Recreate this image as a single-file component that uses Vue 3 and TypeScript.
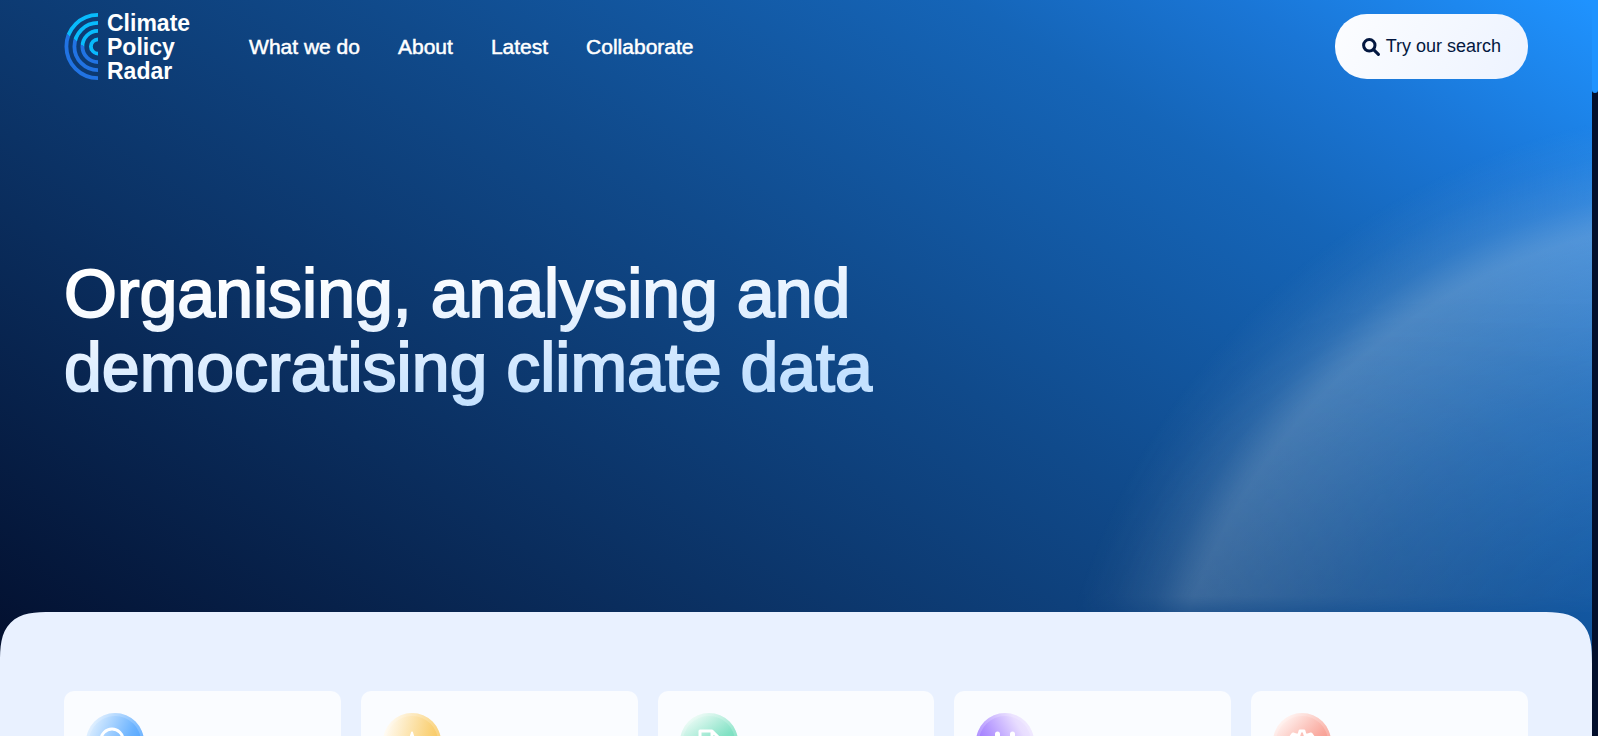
<script setup lang="ts">
interface Feature {
  name: string
  icon: string
}

const links: string[] = ['What we do', 'About', 'Latest', 'Collaborate']

const features: Feature[] = [
  { name: 'lens', icon: 'M34 35l8 8M26 16a11 11 0 1 0 0 22a11 11 0 0 0 0-22z' },
  { name: 'spark', icon: 'M29 19.500l2.500 8L40 30l-8.500 2.500L29 41l-2.500-8.500L18 30l8.500-2.500z' },
  { name: 'document', icon: 'M20 18H32l6.500 6.500V42H20zM32 18v6.500h6.500' },
  { name: 'people', icon: 'M21.500 21v18M36.500 21v18M21.500 32h15' },
  {
    name: 'settings',
    icon: 'M27 18h4l1 4h3l3-1l3 4l-2 3l1 3l3 1v4l-4 1l-2 4l-8 1l-8-1l-2-4l-4-1v-4l3-1l1-3l-2-3l3-4l3 1h3zM29 28a5 5 0 1 0 .1 0z'
  }
]
</script>

<template>
  <div class="shell">
    <div class="page">
      <header class="header">
        <a class="logo" href="#">
          <svg class="logo-mark" viewBox="0 0 34 67" aria-hidden="true">
            <defs>
              <linearGradient id="radar" gradientUnits="userSpaceOnUse" x1="4" y1="34" x2="16" y2="18">
                <stop offset="0.5" stop-color="#2173e3" />
                <stop offset="0.5" stop-color="#08bbfc" />
              </linearGradient>
            </defs>
            <g fill="none" stroke="url(#radar)" stroke-width="3.8">
              <path d="M34 1.900a31.600 31.600 0 0 0 0 63.200" />
              <path d="M34 9.900a23.600 23.600 0 0 0 0 47.200" />
              <path d="M34 17.900a15.600 15.600 0 0 0 0 31.200" />
              <path d="M34 26.400a7.100 7.100 0 0 0 0 14.200" />
            </g>
          </svg>
          <span class="logo-text">Climate<br />Policy<br />Radar</span>
        </a>
        <nav class="nav" aria-label="Main">
          <a v-for="link in links" :key="link" href="#">{{ link }}</a>
        </nav>
        <a class="search" href="#">
          <svg viewBox="0 0 18 18" aria-hidden="true">
            <circle cx="7.300" cy="7.300" r="5.700" />
            <path d="M11.600 11.600L16.400 16.400" />
          </svg>
          <span>Try our search</span>
        </a>
      </header>

      <section class="hero">
        <h1>Organising, analysing and<br />democratising climate data</h1>
      </section>

      <div class="glow" aria-hidden="true"></div>

      <main class="panel">
        <article v-for="feature in features" :key="feature.name" class="card">
          <span class="badge" :class="feature.name">
            <svg viewBox="0 0 58 58" aria-hidden="true"><path :d="feature.icon" /></svg>
          </span>
        </article>
      </main>
    </div>
    <div class="rail" aria-hidden="true"><div class="thumb"></div></div>
  </div>
</template>

<style>
body {
  margin: 0;
}
</style>

<style scoped>
.shell {
  display: flex;
  height: 100vh;
  overflow: hidden;
  background: #020f2c;
  font-family: "Liberation Sans", Arial, sans-serif;
}

.page {
  position: relative;
  display: flex;
  flex: 1;
  flex-direction: column;
  min-width: 0;
  overflow: hidden;
  background: linear-gradient(33deg, #03102f 5%, #0a2d5d 30%, #104a8b 55%, #1565b8 77%, #1a76d6 87%, #1f93ff 100%);
}

.glow {
  position: absolute;
  inset: 0 0 124px;
  background: radial-gradient(
    circle at calc(100% + 150px) 802px,
    rgba(205, 220, 230, 0) 200px,
    rgba(205, 220, 230, 0.17) 440px,
    rgba(205, 220, 230, 0.31) 585px,
    rgba(205, 220, 230, 0.28) 594px,
    rgba(205, 220, 230, 0.15) 620px,
    rgba(205, 220, 230, 0.05) 660px,
    rgba(205, 220, 230, 0) 696px
  );
  -webkit-mask-image: linear-gradient(to top, rgba(0, 0, 0, 0.4), rgba(0, 0, 0, 0.75) 16px, #000 320px);
  mask-image: linear-gradient(to top, rgba(0, 0, 0, 0.4), rgba(0, 0, 0, 0.75) 16px, #000 320px);
  pointer-events: none;
}

.header {
  display: flex;
  flex-shrink: 0;
  align-items: center;
  min-height: 93px;
  padding: 0 64px;
}

.logo {
  display: flex;
  align-items: center;
  gap: 9px;
  color: #fff;
  text-decoration: none;
}

.logo-mark {
  width: 34px;
  height: 67px;
}

.logo-text {
  font-size: 23px;
  font-weight: 700;
  line-height: 24px;
}

.nav {
  display: flex;
  gap: 38px;
  margin-left: 59px;
}

.nav a {
  color: #fff;
  font-size: 21px;
  line-height: 24px;
  text-decoration: none;
  -webkit-text-stroke: 0.5px #fff;
}

.search {
  display: flex;
  align-items: center;
  gap: 6px;
  margin-left: auto;
  padding: 22px 27px;
  border-radius: 32px;
  background: linear-gradient(120deg, #fcfdff, #edf3ff);
  color: #031740;
  font-size: 18px;
  line-height: 21px;
  text-decoration: none;
}

.search svg {
  width: 18px;
  height: 18px;
  fill: none;
  stroke: #031740;
  stroke-linecap: round;
  stroke-width: 3;
}

.hero {
  flex-shrink: 0;
  padding: 163px 64px 200px;
}

h1 {
  width: fit-content;
  margin: 0;
  padding-bottom: 8px;
  background: linear-gradient(175deg, #fff 18%, #e3f0ff 48%, #c3e1ff 82%);
  -webkit-background-clip: text;
  background-clip: text;
  color: transparent;
  font-size: 68px;
  font-weight: 400;
  line-height: 74px;
  -webkit-text-stroke: 2px transparent;
}

.panel {
  position: relative;
  display: grid;
  flex: 1 0 auto;
  grid-template-columns: repeat(5, 1fr);
  gap: 20px;
  padding: 79px 64px 0;
  border-radius: 52px 52px 0 0;
  corner-shape: superellipse(1.6);
  background: #e9f1ff;
}

.card {
  min-height: 200px;
  padding: 22px;
  border-radius: 10px;
  background: #fafcff;
}

.badge {
  display: block;
  width: 58px;
  height: 58px;
  border-radius: 50%;
  box-shadow: inset 0 0 0 3px rgba(255, 255, 255, 0.18);
}

.badge svg {
  display: block;
  fill: none;
  stroke: #fff;
  stroke-linecap: round;
  stroke-linejoin: round;
  stroke-width: 3;
}

.badge.lens {
  background: linear-gradient(115deg, #eaf5ff 5%, #69b2ff 65%, #3a98ff);
}

.badge.spark {
  background: linear-gradient(105deg, #fffaf0 10%, #fad27a 70%, #f7c04c);
}

.badge.spark svg {
  fill: #fff;
  stroke-width: 2;
}

.badge.document {
  background: linear-gradient(145deg, #ecfbf6 12%, #83e2c5 55%, #4fd1ab);
}

.badge.people {
  background: linear-gradient(60deg, #8758ff, #b598ff 40%, #e8ddff 75%, #f3edff);
}

.badge.people svg {
  stroke-width: 5;
}

.badge.settings {
  background: linear-gradient(135deg, #fff0ed 15%, #f9a79c 60%, #f4776a);
}

.rail {
  width: 6px;
  background: #020f2c;
}

.thumb {
  height: 93px;
  border-radius: 0 0 3px 3px;
  background: #1f93ff;
}
</style>
